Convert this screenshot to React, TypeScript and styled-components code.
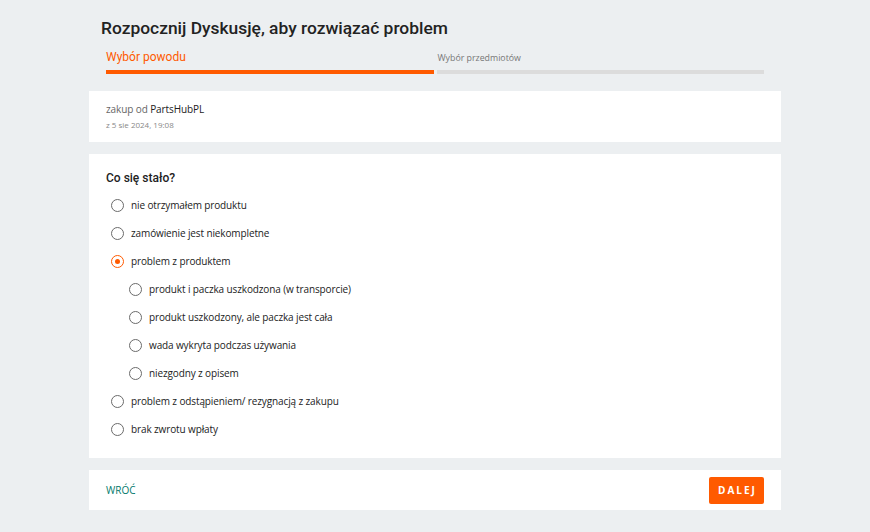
import styled, { createGlobalStyle } from "styled-components";

const GlobalStyle = createGlobalStyle`
  body {
    margin: 0;
    background-color: #eceff1;
    font-family: "Open Sans", "Liberation Sans", sans-serif;
    color: #222;
  }
`;

type Option = { label: string; checked?: boolean; sub?: boolean };

const options: Option[] = [
  { label: "nie otrzymałem produktu" },
  { label: "zamówienie jest niekompletne" },
  { label: "problem z produktem", checked: true },
  { label: "produkt i paczka uszkodzona (w transporcie)", sub: true },
  { label: "produkt uszkodzony, ale paczka jest cała", sub: true },
  { label: "wada wykryta podczas używania", sub: true },
  { label: "niezgodny z opisem", sub: true },
  { label: "problem z odstąpieniem/ rezygnacją z zakupu" },
  { label: "brak zwrotu wpłaty" },
];

const App = () => {
  return (
    <>
      <GlobalStyle />
      <Page>
        <Header>
          <Title>Rozpocznij Dyskusję, aby rozwiązać problem</Title>
          <Steps>
            <Step>
              <StepLabel active>Wybór powodu</StepLabel>
              <StepBar active />
            </Step>
            <Step>
              <StepLabel>Wybór przedmiotów</StepLabel>
              <StepBar />
            </Step>
          </Steps>
        </Header>

        <OrderCard>
          <Seller>
            zakup od <strong>PartsHubPL</strong>
          </Seller>
          <OrderDate>z 5 sie 2024, 19:08</OrderDate>
        </OrderCard>

        <ReasonCard>
          <Question>Co się stało?</Question>
          <OptionList>
            {options.map((o) => (
              <OptionRow key={o.label} sub={o.sub}>
                <Radio checked={o.checked} />
                <OptionText>{o.label}</OptionText>
              </OptionRow>
            ))}
          </OptionList>
        </ReasonCard>

        <Footer>
          <BackLink href="#">WRÓĆ</BackLink>
          <NextButton type="button">DALEJ</NextButton>
        </Footer>
      </Page>
    </>
  );
};

export default App;

const Page = styled.div`
  width: 692px;
  margin: 0 auto;
  display: flex;
  flex-direction: column;
`;

const Header = styled.div`
  padding: 17px 17px 17px 12px;
`;

const Title = styled.h1`
  margin: 0;
  font-family: Roboto, "Liberation Sans", sans-serif;
  font-size: 17.4px;
  line-height: 22px;
  font-weight: 500;
  color: #222;
`;

const Steps = styled.div`
  display: flex;
  gap: 3px;
  margin: 10px 0 0 5px;
`;

const Step = styled.div`
  flex: 1;
  display: flex;
  flex-direction: column;
`;

const StepLabel = styled.div<{ active?: boolean }>`
  box-sizing: border-box;
  height: 16px;
  line-height: 16px;
  margin-bottom: 5px;
  white-space: nowrap;
  ${({ active }) =>
    active
      ? `font-family: Roboto, "Liberation Sans", sans-serif; font-size: 12px; color: #ff5a00;`
      : `font-size: 8.8px; line-height: 14px; color: #777; padding-left: 1px; padding-top: 2px;`}
`;

const StepBar = styled.div<{ active?: boolean }>`
  height: 4px;
  background-color: ${({ active }) => (active ? "#ff5a00" : "#dcdcdc")};
`;

const Card = styled.div`
  background-color: #fff;
  padding: 0 17px;
`;

const OrderCard = styled(Card)`
  padding-top: 11px;
  padding-bottom: 12px;
  margin-bottom: 12px;
`;

const Seller = styled.div`
  font-size: 10px;
  line-height: 14px;
  color: #666;
  letter-spacing: -0.1px;

  strong {
    font-weight: 400;
    color: #222;
  }
`;

const OrderDate = styled.div`
  margin-top: 4px;
  font-size: 8px;
  line-height: 10px;
  color: #888;
`;

const ReasonCard = styled(Card)`
  padding-top: 16px;
  padding-bottom: 15px;
  margin-bottom: 12px;
`;

const Question = styled.h2`
  margin: 0 0 5px;
  font-family: Roboto, "Liberation Sans", sans-serif;
  font-size: 12px;
  line-height: 16px;
  font-weight: 500;
  color: #222;
`;

const OptionList = styled.div`
  display: flex;
  flex-direction: column;
`;

const OptionRow = styled.label<{ sub?: boolean }>`
  height: 28px;
  display: flex;
  align-items: center;
  gap: 7px;
  padding-left: ${({ sub }) => (sub ? "23px" : "5px")};
  cursor: pointer;
`;

const Radio = styled.span<{ checked?: boolean }>`
  width: 13px;
  height: 13px;
  box-sizing: border-box;
  border-radius: 50%;
  border: 1px solid ${({ checked }) => (checked ? "#ff5a00" : "#6b6b6b")};
  display: flex;
  align-items: center;
  justify-content: center;
  flex-shrink: 0;

  &::after {
    content: "";
    width: 5px;
    height: 5px;
    border-radius: 50%;
    background-color: #ff5a00;
    display: ${({ checked }) => (checked ? "block" : "none")};
  }
`;

const OptionText = styled.span`
  font-size: 10px;
  line-height: 14px;
  letter-spacing: -0.12px;
  color: #222;
`;

const Footer = styled(Card)`
  height: 40px;
  box-sizing: border-box;
  display: flex;
  align-items: center;
  justify-content: space-between;
`;

const BackLink = styled.a`
  font-size: 10px;
  color: #00796b;
  text-decoration: none;
`;

const NextButton = styled.button`
  width: 55px;
  height: 27px;
  border: none;
  border-radius: 2px;
  background-color: #ff5a00;
  color: #fff;
  font-family: "Open Sans", "Liberation Sans", sans-serif;
  font-size: 10px;
  font-weight: 700;
  letter-spacing: 2px;
  padding: 0 0 0 2px;
  cursor: pointer;
`;
